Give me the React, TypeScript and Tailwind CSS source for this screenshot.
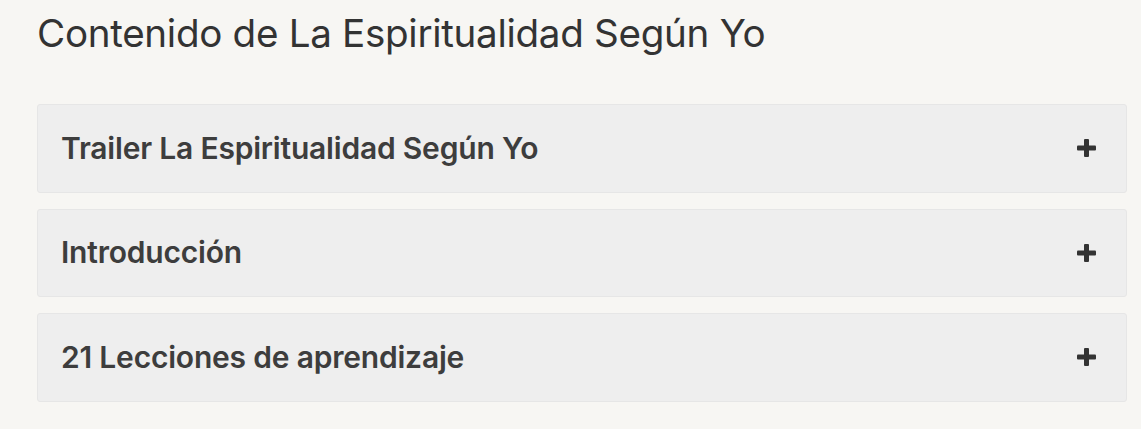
import React from "react";

const items = [
  "Trailer La Espiritualidad Según Yo",
  "Introducción",
  "21 Lecciones de aprendizaje",
];

function Plus() {
  return (
    <svg width="19" height="18" viewBox="0 0 19 18" className="shrink-0">
      <rect x="7" y="0" width="5" height="18" rx="1" fill="#333333" />
      <rect x="0" y="6.5" width="19" height="5" rx="1" fill="#333333" />
    </svg>
  );
}

export default function App() {
  return (
    <div
      className="w-[1141px] h-[429px] bg-[#f7f6f3] overflow-hidden"
      style={{ fontFamily: "Inter, 'Noto Sans', sans-serif" }}
    >
      <div className="pl-[37px] pr-[14px] pt-[9px]">
        <h1 className="text-[38.6px] leading-[48px] font-normal text-[#333333] tracking-[-0.3px]">
          Contenido de La Espiritualidad Según Yo
        </h1>
        <div className="mt-[47px] flex flex-col gap-[16px]">
          {items.map((t) => (
            <div
              key={t}
              className="h-[88.5px] bg-[#eeeeee] border border-[#e6e6e6] rounded-[3px] flex items-center justify-between pl-[23px] pr-[30px]"
            >
              <span className="text-[30px] font-semibold text-[#3d3d3d] tracking-[-0.2px]">
                {t}
              </span>
              <Plus />
            </div>
          ))}
        </div>
      </div>
    </div>
  );
}
